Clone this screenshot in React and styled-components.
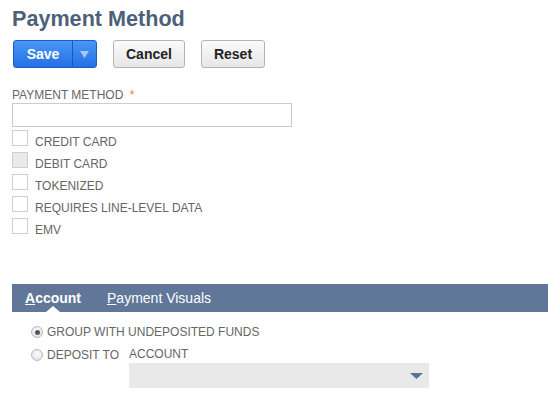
import styled, { createGlobalStyle } from 'styled-components';

const GlobalStyle = createGlobalStyle`
  body {
    margin: 0;
    background: #fff;
    font-family: "Liberation Sans", Arial, sans-serif;
  }
`;

const checks = [
  { label: 'CREDIT CARD' },
  { label: 'DEBIT CARD', disabled: true },
  { label: 'TOKENIZED' },
  { label: 'REQUIRES LINE-LEVEL DATA' },
  { label: 'EMV' },
];

function App() {
  return (
    <Page>
      <GlobalStyle />
      <Title>Payment Method</Title>
      <ButtonRow>
        <SplitButton>
          <SaveMain>Save</SaveMain>
          <SaveArrow>
            <svg width="9" height="7" viewBox="0 0 9 7">
              <path d="M0 0 H9 L4.5 7 Z" fill="#a8c8f2" />
            </svg>
          </SaveArrow>
        </SplitButton>
        <GrayButton>Cancel</GrayButton>
        <GrayButton>Reset</GrayButton>
      </ButtonRow>

      <FieldLabel>
        PAYMENT METHOD <Required>*</Required>
      </FieldLabel>
      <TextInput />

      <CheckList>
        {checks.map((c) => (
          <CheckRow key={c.label}>
            <CheckBox $disabled={c.disabled} />
            <CheckText>{c.label}</CheckText>
          </CheckRow>
        ))}
      </CheckList>

      <TabBar>
        <Tab $active>
          <u>A</u>ccount
        </Tab>
        <Tab>
          <u>P</u>ayment Visuals
        </Tab>
      </TabBar>

      <TabBody>
        <RadioRow>
          <Radio $checked />
          <RadioText>GROUP WITH UNDEPOSITED FUNDS</RadioText>
        </RadioRow>
        <RadioRow $second>
          <Radio />
          <RadioText $width="82px">DEPOSIT TO</RadioText>
          <AccountField>
            <AccountLabel>ACCOUNT</AccountLabel>
            <Select>
              <svg width="13" height="6" viewBox="0 0 13 6">
                <path d="M0 0 H13 L6.5 6 Z" fill="#5b7399" />
              </svg>
            </Select>
          </AccountField>
        </RadioRow>
      </TabBody>
    </Page>
  );
}

const Page = styled.div`
  padding: 6px 0 0 12px;
  width: 536px;
`;

const Title = styled.h1`
  margin: 0;
  font-size: 21.6px;
  line-height: 26px;
  font-weight: bold;
  color: #4d5f79;
`;

const ButtonRow = styled.div`
  display: flex;
  gap: 16px;
  margin: 8px 0 0 1px;
`;

const SplitButton = styled.div`
  display: flex;
  height: 28px;
  box-sizing: border-box;
  border: 1px solid #1d5fc0;
  border-radius: 3px;
  background: linear-gradient(#4797f7, #2470e6);
  overflow: hidden;
`;

const SaveMain = styled.div`
  width: 58px;
  text-align: center;
  line-height: 26px;
  font-size: 14px;
  font-weight: bold;
  color: #fff;
`;

const SaveArrow = styled.div`
  width: 23px;
  display: flex;
  align-items: center;
  justify-content: center;
  border-left: 1px solid #1858b8;
`;

const GrayButton = styled.div`
  height: 28px;
  box-sizing: border-box;
  padding: 0 12px;
  border: 1px solid #b4b4b4;
  border-radius: 3px;
  background: linear-gradient(#fbfbfb, #e6e6e6);
  font-size: 14px;
  font-weight: bold;
  line-height: 26px;
  color: #222;
`;

const FieldLabel = styled.div`
  margin-top: 20px;
  font-size: 12px;
  line-height: 14px;
  color: #666;
`;

const Required = styled.span`
  color: #e08a2c;
  margin-left: 3px;
`;

const TextInput = styled.div`
  margin-top: 1px;
  width: 280px;
  height: 24px;
  box-sizing: border-box;
  border: 1px solid #cccccc;
  background: #fff;
`;

const CheckList = styled.div`
  display: flex;
  flex-direction: column;
`;

const CheckRow = styled.div`
  display: flex;
  align-items: flex-end;
  height: 22px;
`;

const CheckBox = styled.div`
  align-self: flex-start;
  margin-top: 3px;
  width: 16px;
  height: 16px;
  box-sizing: border-box;
  border: 1px solid #cfcfcf;
  background: ${(p) => (p.$disabled ? '#e9e9e9' : '#fff')};
`;

const CheckText = styled.span`
  margin-left: 7px;
  font-size: 12px;
  line-height: 14px;
  color: #666;
`;

const TabBar = styled.div`
  margin-top: 47px;
  height: 28px;
  background: #607799;
  display: flex;
  padding-left: 13px;
  gap: 26px;
`;

const Tab = styled.div`
  position: relative;
  font-size: 14px;
  line-height: 28px;
  color: #fff;
  font-weight: ${(p) => (p.$active ? 'bold' : 'normal')};

  &::after {
    content: '';
    display: ${(p) => (p.$active ? 'block' : 'none')};
    position: absolute;
    left: 50%;
    bottom: 0;
    transform: translateX(-50%);
    border-left: 7px solid transparent;
    border-right: 7px solid transparent;
    border-bottom: 6px solid #fff;
  }
`;

const TabBody = styled.div`
  padding: 13px 0 0 19px;
`;

const RadioRow = styled.div`
  display: flex;
  align-items: flex-start;
  margin-top: ${(p) => (p.$second ? '9px' : '0')};
`;

const Radio = styled.div`
  position: relative;
  width: 12px;
  height: 12px;
  margin-top: 1px;
  box-sizing: border-box;
  border-radius: 50%;
  border: 1px solid #b9b9b9;
  background: radial-gradient(circle at 50% 40%, #fdfdfd, #dcdcdc);

  &::after {
    content: '';
    display: ${(p) => (p.$checked ? 'block' : 'none')};
    position: absolute;
    left: 2.5px;
    top: 2.5px;
    width: 5px;
    height: 5px;
    border-radius: 50%;
    background: #555;
  }
`;

const RadioText = styled.span`
  margin-left: 4px;
  width: ${(p) => p.$width || 'auto'};
  font-size: 12px;
  line-height: 14px;
  color: #666;
`;

const AccountField = styled.div`
  display: flex;
  flex-direction: column;
`;

const AccountLabel = styled.div`
  font-size: 12px;
  line-height: 13px;
  color: #666;
`;

const Select = styled.div`
  margin-top: 2px;
  width: 300px;
  height: 25px;
  background: #e9e9e9;
  display: flex;
  align-items: center;
  justify-content: flex-end;
  padding-right: 6px;
  box-sizing: border-box;
`;

export default App;
